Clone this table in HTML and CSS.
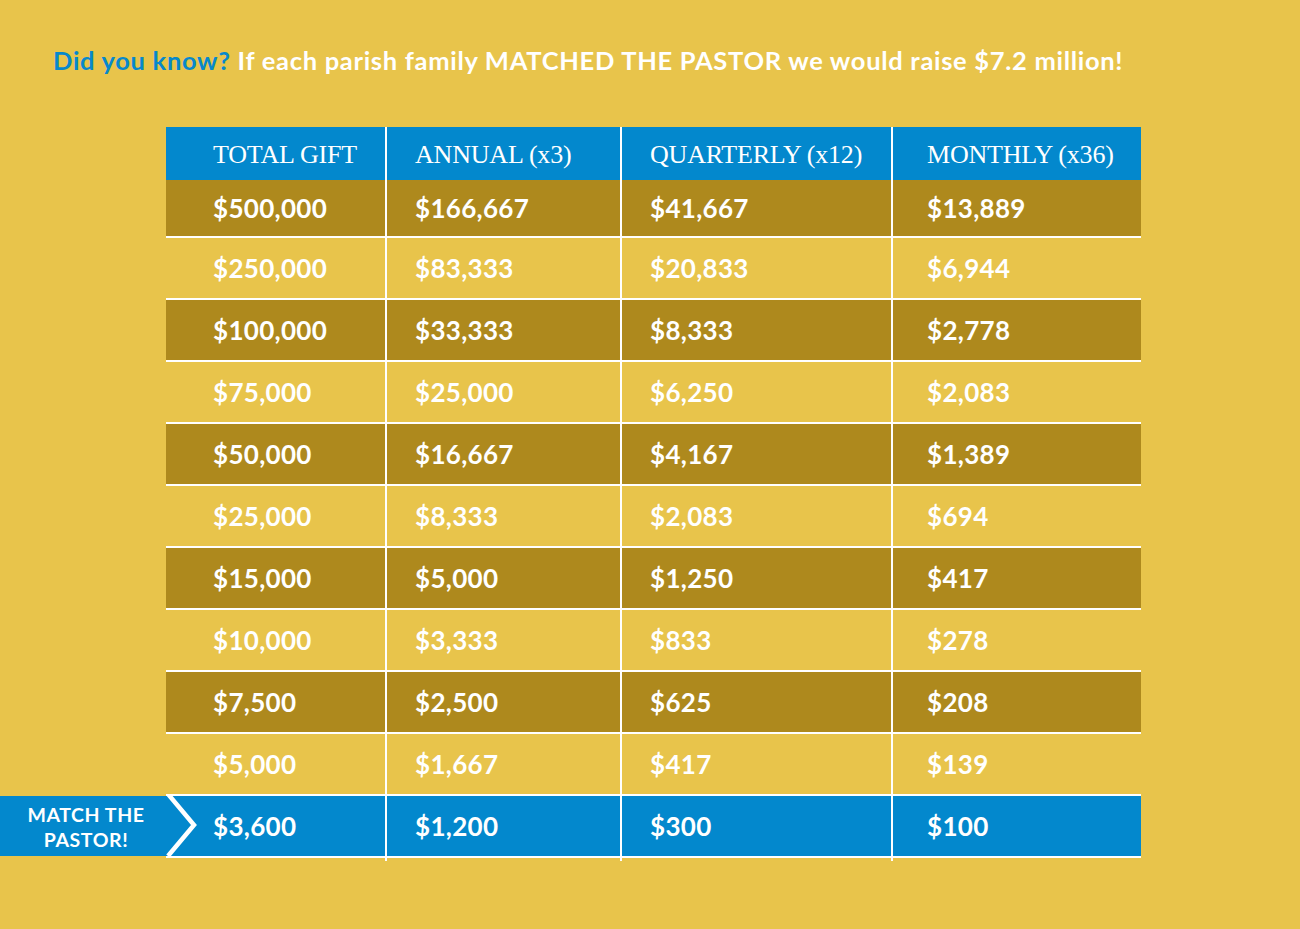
FILE: index.html
```html
<!DOCTYPE html>
<html lang="en">
<head>
<meta charset="utf-8">
<title>Match the Pastor</title>
<link rel="stylesheet" href="styles.css">
</head>
<body>
<main class="page">
  <h1 class="headline"><span class="hl-blue">Did you know?</span> If each parish family MATCHED THE PASTOR we would raise $7.2 million!</h1>

  <div class="gift-table">
    <div class="row head">
      <div class="cell c1">TOTAL GIFT</div>
      <div class="cell c2">ANNUAL (x3)</div>
      <div class="cell c3">QUARTERLY (x12)</div>
      <div class="cell c4">MONTHLY (x36)</div>
    </div>
    <div class="row dark first">
      <div class="cell c1">$500,000</div><div class="cell c2">$166,667</div><div class="cell c3">$41,667</div><div class="cell c4">$13,889</div>
    </div>
    <div class="row light">
      <div class="cell c1">$250,000</div><div class="cell c2">$83,333</div><div class="cell c3">$20,833</div><div class="cell c4">$6,944</div>
    </div>
    <div class="row dark">
      <div class="cell c1">$100,000</div><div class="cell c2">$33,333</div><div class="cell c3">$8,333</div><div class="cell c4">$2,778</div>
    </div>
    <div class="row light">
      <div class="cell c1">$75,000</div><div class="cell c2">$25,000</div><div class="cell c3">$6,250</div><div class="cell c4">$2,083</div>
    </div>
    <div class="row dark">
      <div class="cell c1">$50,000</div><div class="cell c2">$16,667</div><div class="cell c3">$4,167</div><div class="cell c4">$1,389</div>
    </div>
    <div class="row light">
      <div class="cell c1">$25,000</div><div class="cell c2">$8,333</div><div class="cell c3">$2,083</div><div class="cell c4">$694</div>
    </div>
    <div class="row dark">
      <div class="cell c1">$15,000</div><div class="cell c2">$5,000</div><div class="cell c3">$1,250</div><div class="cell c4">$417</div>
    </div>
    <div class="row light">
      <div class="cell c1">$10,000</div><div class="cell c2">$3,333</div><div class="cell c3">$833</div><div class="cell c4">$278</div>
    </div>
    <div class="row dark">
      <div class="cell c1">$7,500</div><div class="cell c2">$2,500</div><div class="cell c3">$625</div><div class="cell c4">$208</div>
    </div>
    <div class="row light">
      <div class="cell c1">$5,000</div><div class="cell c2">$1,667</div><div class="cell c3">$417</div><div class="cell c4">$139</div>
    </div>
    <div class="row blue last">
      <div class="badge">MATCH THE<br>PASTOR!</div>
      <svg class="chevron" width="34" height="66" viewBox="0 0 34 66" aria-hidden="true">
        <polyline points="2,0 28,31 2,62" fill="none" stroke="#ffffff" stroke-width="4.5" stroke-linejoin="miter"/>
      </svg>
      <div class="cell c1">$3,600</div><div class="cell c2">$1,200</div><div class="cell c3">$300</div><div class="cell c4">$100</div>
    </div>
  </div>
</main>
</body>
</html>
```

FILE: styles.css
```css
html, body {
  margin: 0;
  padding: 0;
}

body {
  background: #e8c44b;
  font-family: "Lato", "Liberation Sans", sans-serif;
  width: 1300px;
  height: 929px;
  overflow: hidden;
}

.page {
  padding-top: 44px;
}

.headline {
  margin: 0 0 0 53px;
  font-size: 25.5px;
  font-weight: 700;
  line-height: 32px;
  color: #ffffff;
  letter-spacing: 0.7px;
  white-space: nowrap;
}

.hl-blue {
  color: #0788cc;
}

.gift-table {
  margin: 51px 0 0 166px;
  width: 975px;
}

.row {
  display: grid;
  grid-template-columns: 221px 235px 271px 248px;
  height: 62px;
  position: relative;
}

.cell {
  display: flex;
  align-items: center;
  color: #ffffff;
  font-size: 26px;
  font-weight: 700;
  letter-spacing: 0.3px;
  border-right: 2px solid #ffffff;
  border-bottom: 2px solid #ffffff;
  box-sizing: border-box;
  position: relative;
}

.cell.c4 {
  border-right: 0;
}

.row.last .cell:not(.c4)::after {
  content: "";
  position: absolute;
  right: -2px;
  bottom: -5px;
  width: 2px;
  height: 3px;
  background: #ffffff;
}

.c1 { padding-left: 47px; }
.c2 { padding-left: 28px; }
.c3 { padding-left: 28px; }
.c4 { padding-left: 34px; }

.row.head {
  height: 53px;
  background: #0388cd;
}

.row.head .cell {
  border-bottom: 0;
  font-family: "Liberation Serif", "DejaVu Serif", serif;
  font-weight: 400;
  font-size: 26px;
  letter-spacing: -0.2px;
  padding-top: 2px;
}

.row.first {
  height: 58px;
}

.row.dark {
  background: #ae891d;
}

.row.light {
  background: #e8c44b;
}

.row.blue {
  background: #0388cd;
}

.badge {
  position: absolute;
  right: 100%;
  top: 0;
  width: 166px;
  height: 60px;
  background: #0388cd;
  color: #ffffff;
  font-size: 19.5px;
  font-weight: 700;
  letter-spacing: 0.6px;
  line-height: 25px;
  text-align: center;
  display: flex;
  align-items: center;
  justify-content: center;
  padding-left: 6px;
  padding-top: 2px;
  box-sizing: border-box;
}

.chevron {
  position: absolute;
  left: 0;
  top: -2px;
}
```
